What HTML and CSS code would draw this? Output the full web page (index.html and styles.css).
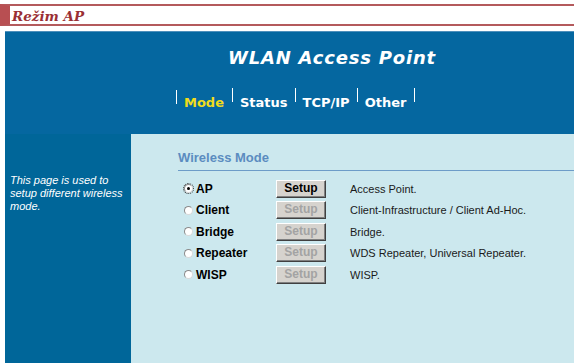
FILE: index.html
```html
<!DOCTYPE html>
<html>
<head>
<meta charset="utf-8">
<link rel="stylesheet" href="styles.css">
</head>
<body>
<div class="titlebar"><span class="title-text">Režim AP</span></div>
<div class="app">
  <div class="header">
    <div class="brand">WLAN Access Point</div>
    <nav class="tabs">
      <div class="tab active">Mode</div>
      <div class="tab">Status</div>
      <div class="tab">TCP/IP</div>
      <div class="tab last">Other</div>
    </nav>
  </div>
  <div class="body">
    <aside class="sidebar">This page is used to setup different wireless mode.</aside>
    <main class="content">
      <div class="section-title">Wireless Mode</div>
      <div class="modes">
        <div class="opt"><span class="radio checked"></span><span class="lbl">AP</span></div>
        <div class="btn">Setup</div>
        <div class="desc">Access Point.</div>

        <div class="opt"><span class="radio"></span><span class="lbl">Client</span></div>
        <div class="btn disabled">Setup</div>
        <div class="desc">Client-Infrastructure / Client Ad-Hoc.</div>

        <div class="opt"><span class="radio"></span><span class="lbl">Bridge</span></div>
        <div class="btn disabled">Setup</div>
        <div class="desc">Bridge.</div>

        <div class="opt"><span class="radio"></span><span class="lbl">Repeater</span></div>
        <div class="btn disabled">Setup</div>
        <div class="desc">WDS Repeater, Universal Repeater.</div>

        <div class="opt"><span class="radio"></span><span class="lbl">WISP</span></div>
        <div class="btn disabled">Setup</div>
        <div class="desc">WISP.</div>
      </div>
    </main>
  </div>
</div>
</body>
</html>
```
FILE: styles.css
```css
* { box-sizing: border-box; }
html, body { margin: 0; padding: 0; background: #fff; overflow: hidden; }
body { width: 574px; height: 363px; }

.titlebar {
  margin-top: 4px;
  height: 22px;
  border-top: 2px solid #b45a5c;
  border-bottom: 2px solid #b45a5c;
  border-left: 10px solid #b84f52;
  display: flex;
  align-items: center;
  padding-left: 2px;
}
.title-text {
  font-family: "DejaVu Serif", serif;
  font-weight: bold;
  font-style: italic;
  font-size: 13.5px;
  color: #9a2f34;
  line-height: 16px;
  padding-top: 1px;
}

.app {
  margin-top: 5px;
  margin-left: 5px;
  height: 332px;
  background: #006699;
  display: flex;
  flex-direction: column;
}

.header {
  height: 103px;
  border-top: 1px solid #4e8fbb;
  background: #0567a0;
  padding-top: 15px;
}
.brand {
  padding-left: 223px;
  font-family: "DejaVu Sans", sans-serif;
  font-weight: bold;
  font-style: italic;
  font-size: 18px;
  line-height: 22px;
  color: #fff;
  letter-spacing: 0.8px;
}
.tabs {
  display: flex;
  align-items: flex-start;
  margin-top: 19px;
  padding-left: 171px;
}
.tab {
  box-sizing: content-box;
  height: 6px;
  padding: 8px 7px 0 7px;
  border-left: 1px solid #fff;
  line-height: 14px;
  font-family: "DejaVu Sans", sans-serif;
  font-weight: bold;
  font-size: 13px;
  color: #fff;
  white-space: nowrap;
}
.tab.active { color: #f0dc1c; padding-left: 7px; padding-right: 8px; height: 8px; margin-top: 2px; padding-top: 6px; }
.tab.last { border-right: 1px solid #fff; padding-right: 8px; }

.body {
  flex: 1;
  display: flex;
}
.sidebar {
  width: 126px;
  flex: none;
  background: #006699;
  padding: 40px 2px 0 5px;
  font-family: "Liberation Sans", Arial, sans-serif;
  font-style: italic;
  font-size: 11px;
  line-height: 13px;
  color: #fff;
}
.content {
  flex: 1;
  background: #cce8ee;
  padding: 16px 0 0 47px;
}
.section-title {
  font-family: "Liberation Sans", Arial, sans-serif;
  font-weight: bold;
  font-size: 13px;
  line-height: 15px;
  color: #5b8cc0;
  padding-bottom: 5px;
  border-bottom: 1px solid #6d9cc8;
}
.modes {
  margin-top: 7px;
  padding-left: 5px;
  display: grid;
  grid-template-columns: 93px 50px auto;
  column-gap: 0;
  grid-auto-rows: 21.5px;
  align-items: center;
}
.opt {
  display: flex;
  align-items: center;
}
.radio {
  width: 9px;
  height: 9px;
  border-radius: 50%;
  background: #fff;
  border: 1px solid #8a8a8a;
  border-right-color: #d8d8d8;
  border-bottom-color: #d8d8d8;
  display: flex;
  align-items: center;
  justify-content: center;
  flex: none;
  margin-left: 1px;
}
.radio.checked {
  outline: 1px dotted #333;
  outline-offset: 0;
}
.radio.checked::after {
  content: "";
  width: 3px;
  height: 3px;
  border-radius: 50%;
  background: #000;
}
.lbl {
  margin-left: 3px;
  font-family: "Liberation Sans", Arial, sans-serif;
  font-weight: bold;
  font-size: 12px;
  color: #000;
}
.btn {
  width: 50px;
  height: 18px;
  background: #d6d3ce;
  border: 1px solid;
  border-color: #fff #404040 #404040 #fff;
  box-shadow: inset -1px -1px 0 #808080;
  font-family: "Liberation Sans", Arial, sans-serif;
  font-weight: bold;
  font-size: 12px;
  line-height: 15px;
  text-align: center;
  color: #000;
}
.btn.disabled { color: #a3a3a3; }
.desc {
  padding-left: 24px;
  font-family: "Liberation Sans", Arial, sans-serif;
  font-size: 11px;
  color: #1a1a1a;
  white-space: nowrap;
}
```
